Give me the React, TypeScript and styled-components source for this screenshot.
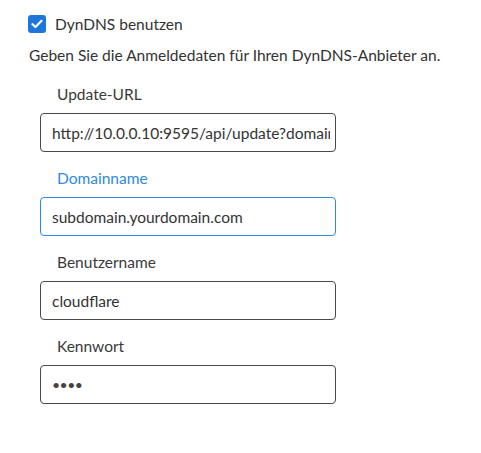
import React from "react";
import styled, { createGlobalStyle } from "styled-components";

const Global = createGlobalStyle`
  body {
    margin: 0;
    background: #ffffff;
    font-family: Lato, "Open Sans", sans-serif;
    color: #333333;
  }
`;

const Page = styled.div`
  padding: 14px 0 0 28px;
  display: flex;
  flex-direction: column;
`;

const CheckRow = styled.label`
  display: flex;
  align-items: center;
  gap: 9px;
  font-size: 15.5px;
  height: 19px;
  color: #333;
`;

const Box = styled.span`
  width: 18px;
  height: 18px;
  border-radius: 3px;
  background: #1d77d8;
  display: flex;
  align-items: center;
  justify-content: center;
`;

const Description = styled.p`
  margin: 12px 0 0 1px;
  font-size: 15.5px;
  line-height: 20px;
  color: #333;
`;

const Fields = styled.div`
  margin: 19px 0 0 12px;
  display: flex;
  flex-direction: column;
  gap: 16px;
  width: 296px;
`;

const Field = styled.div`
  display: flex;
  flex-direction: column;
  gap: 9px;
`;

const Label = styled.span<{ $focused?: boolean }>`
  padding-left: 17px;
  font-size: 15.5px;
  line-height: 20px;
  color: ${(p) => (p.$focused ? "#2f8ae3" : "#3a3a3a")};
`;

const Input = styled.div<{ $focused?: boolean; $password?: boolean }>`
  box-sizing: border-box;
  height: 39px;
  border: 1px solid ${(p) => (p.$focused ? "#2f8ae3" : "#4a4a4a")};
  border-radius: 4px;
  padding: 0 5px 0 11px;
  display: flex;
  align-items: center;
  font-size: ${(p) => (p.$password ? "14px" : "15.5px")};
  color: ${(p) => (p.$password ? "#444" : "#333")};
  letter-spacing: ${(p) => (p.$password ? "-0.5px" : "0")};
`;

const Value = styled.span`
  white-space: nowrap;
  overflow: hidden;
`;

export default function App() {
  const fields = [
    { label: "Update-URL", value: "http://10.0.0.10:9595/api/update?domain=" },
    { label: "Domainname", value: "subdomain.yourdomain.com", focused: true },
    { label: "Benutzername", value: "cloudflare" },
    { label: "Kennwort", value: "••••", password: true },
  ];
  return (
    <>
      <Global />
      <Page>
        <CheckRow>
          <Box>
            <svg width="12" height="10" viewBox="0 0 12 10">
              <path d="M1.5 5.2 L4.5 8 L10.5 1.8" fill="none" stroke="#fff" strokeWidth="2.2" strokeLinecap="round" strokeLinejoin="round" />
            </svg>
          </Box>
          DynDNS benutzen
        </CheckRow>
        <Description>Geben Sie die Anmeldedaten für Ihren DynDNS-Anbieter an.</Description>
        <Fields>
          {fields.map((f) => (
            <Field key={f.label}>
              <Label $focused={f.focused}>{f.label}</Label>
              <Input $focused={f.focused} $password={f.password}>
                <Value>{f.value}</Value>
              </Input>
            </Field>
          ))}
        </Fields>
      </Page>
    </>
  );
}
